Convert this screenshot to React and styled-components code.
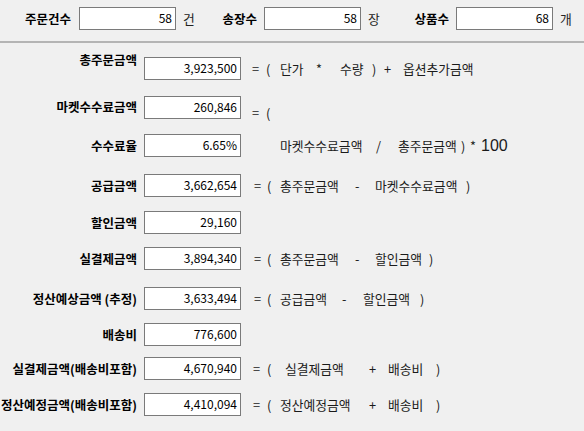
import React from "react";
import styled, { createGlobalStyle } from "styled-components";

const Global = createGlobalStyle`
  html, body { margin: 0; padding: 0; background: #f0f0f0; }
  body {
    font-family: "Noto Sans CJK KR", "Noto Sans", sans-serif;
    font-size: 12.5px;
    color: #000;
    overflow: hidden;
  }
`;

const Page = styled.div`
  width: 584px;
  height: 431px;
  background: #f0f0f0;
  overflow: hidden;
`;

const TopBar = styled.div`
  display: flex;
  align-items: center;
  height: 23px;
  padding-top: 7px;
  padding-bottom: 11px;
`;

const TopLabel = styled.div`
  width: ${(p) => p.$w}px;
  display: flex;
  justify-content: flex-end;
  font-weight: 700;
  white-space: nowrap;
`;

const Field = styled.div`
  box-sizing: border-box;
  width: 97px;
  height: 23px;
  margin-left: ${(p) => p.$ml}px;
  background: #fff;
  border: 1px solid #7a7a7a;
  text-align: right;
  padding-right: 3px;
  font-size: 12px;
  line-height: 20px;
  white-space: nowrap;
  flex-shrink: 0;
`;

const Unit = styled.div`
  width: 12px;
  margin-left: 7px;
  white-space: nowrap;
  color: #222;
  font-size: 12.8px;
`;

const Separator = styled.div`
  height: 2px;
  background: #b4b4b4;
`;

const Row = styled.div`
  display: flex;
  align-items: flex-start;
  height: 23px;
  margin-top: ${(p) => p.$mt}px;
`;

const Label = styled.div`
  width: 137px;
  height: 23px;
  line-height: 23px;
  display: flex;
  justify-content: flex-end;
  font-weight: 700;
  white-space: nowrap;
  margin-top: ${(p) => p.$dy || 0}px;
  flex-shrink: 0;
`;

const Formula = styled.div`
  display: flex;
  height: 23px;
  line-height: 23px;
  margin-top: ${(p) => p.$dy || 0}px;
  white-space: nowrap;
  color: #1a1a1a;
  font-size: 12.8px;
`;

const Token = styled.span`
  display: inline-block;
  flex-shrink: 0;
  ${(p) => (p.$w != null ? `width: ${p.$w}px;` : "")}
  ${(p) => (p.$ml ? `margin-left: ${p.$ml}px;` : "")}
  ${(p) =>
    p.$big
      ? `font-family: "Liberation Sans", Arial, sans-serif; font-size: 16px;`
      : ""}
`;

const topFields = [
  { label: "주문건수", w: 71, gap: 8, value: "58", unit: "건" },
  { label: "송장수", w: 62, gap: 7, value: "58", unit: "장" },
  { label: "상품수", w: 69, gap: 7, value: "68", unit: "개" },
];

const rows = [
  {
    label: "총주문금액", value: "3,923,500", mt: 14, ldy: -9,
    f: [["=", 252], ["(", 266], ["단가", 280], ["*", 316], ["수량", 340], [")", 372], ["+", 384], ["옵션추가금액", 403]],
  },
  { label: "마켓수수료금액", value: "260,846", mt: 16, ldy: -1, fdy: 5, f: [["=", 252], ["(", 266]] },
  {
    label: "수수료율", value: "6.65%", mt: 15,
    f: [["마켓수수료금액", 280], ["/", 376], ["총주문금액", 398], [")", 461], ["*", 470], ["100", 481, true]],
  },
  {
    label: "공급금액", value: "3,662,654", mt: 17,
    f: [["=", 254], ["(", 267], ["총주문금액", 280], ["-", 355], ["마켓수수료금액", 375], [")", 466]],
  },
  { label: "할인금액", value: "29,160", mt: 14, f: [] },
  {
    label: "실결제금액", value: "3,894,340", mt: 13,
    f: [["=", 254], ["(", 267], ["총주문금액", 280], ["-", 355], ["할인금액", 375], [")", 429]],
  },
  {
    label: "정산예상금액 (추정)", value: "3,633,494", mt: 17,
    f: [["=", 254], ["(", 267], ["공급금액", 280], ["-", 342], ["할인금액", 363], [")", 420]],
  },
  { label: "배송비", value: "776,600", mt: 13, f: [] },
  {
    label: "실결제금액(배송비포함)", value: "4,670,940", mt: 11,
    f: [["=", 253], ["(", 267], ["실결제금액", 285], ["+", 369], ["배송비", 388], [")", 436]],
  },
  {
    label: "정산예정금액(배송비포함)", value: "4,410,094", mt: 13,
    f: [["=", 253], ["(", 267], ["정산예정금액", 280], ["+", 369], ["배송비", 388], [")", 436]],
  },
];

const FIELD_RIGHT = 241;

function FormulaLine({ items, dy }) {
  if (!items.length) return null;
  return (
    <Formula $dy={dy}>
      {items.map(([text, x, big], i) => {
        const next = items[i + 1];
        return (
          <Token
            key={i}
            $ml={i === 0 ? x - FIELD_RIGHT : 0}
            $w={next ? next[1] - x : null}
            $big={big}
          >
            {text}
          </Token>
        );
      })}
    </Formula>
  );
}

export default function App() {
  return (
    <Page>
      <Global />
      <TopBar>
        {topFields.map((f) => (
          <React.Fragment key={f.label}>
            <TopLabel $w={f.w}>
              <span>{f.label}</span>
            </TopLabel>
            <Field $ml={f.gap}>{f.value}</Field>
            <Unit>{f.unit}</Unit>
          </React.Fragment>
        ))}
      </TopBar>
      <Separator />
      {rows.map((r) => (
        <Row key={r.label} $mt={r.mt}>
          <Label $dy={r.ldy}>
            <span>{r.label}</span>
          </Label>
          <Field $ml={7}>{r.value}</Field>
          <FormulaLine items={r.f} dy={r.fdy} />
        </Row>
      ))}
    </Page>
  );
}
